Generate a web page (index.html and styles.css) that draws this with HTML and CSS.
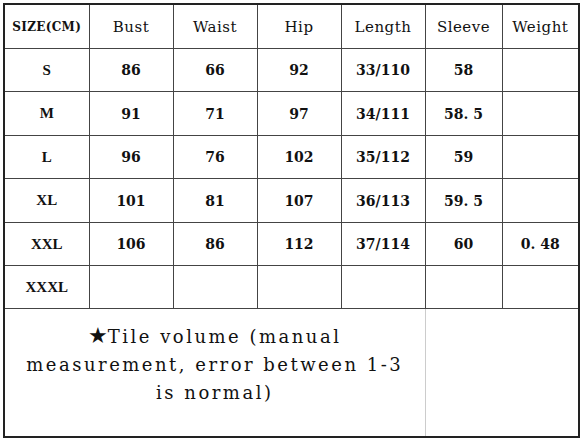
FILE: index.html
```html
<!DOCTYPE html>
<html>
<head>
<meta charset="utf-8">
<link rel="stylesheet" href="styles.css">
</head>
<body>
<table class="chart">
  <colgroup>
    <col class="c-size"><col class="c-std"><col class="c-std"><col class="c-std"><col class="c-std"><col class="c-narrow"><col class="c-narrow">
  </colgroup>
  <tr class="head">
    <td class="size-head">SIZE(CM)</td><td>Bust</td><td>Waist</td><td>Hip</td><td>Length</td><td>Sleeve</td><td>Weight</td>
  </tr>
  <tr class="row r42"><td class="sz">S</td><td>86</td><td>66</td><td>92</td><td>33/110</td><td>58</td><td></td></tr>
  <tr class="row r43"><td class="sz">M</td><td>91</td><td>71</td><td>97</td><td>34/111</td><td>58. 5</td><td></td></tr>
  <tr class="row r42"><td class="sz">L</td><td>96</td><td>76</td><td>102</td><td>35/112</td><td>59</td><td></td></tr>
  <tr class="row r43"><td class="sz">XL</td><td>101</td><td>81</td><td>107</td><td>36/113</td><td>59. 5</td><td></td></tr>
  <tr class="row r42"><td class="sz">XXL</td><td>106</td><td>86</td><td>112</td><td>37/114</td><td>60</td><td>0. 48</td></tr>
  <tr class="row r42"><td class="sz">XXXL</td><td></td><td></td><td></td><td></td><td></td><td></td></tr>
  <tr class="note-row">
    <td class="note" colspan="5"><span class="star">★</span>Tile volume (manual<br>measurement, error between 1-3<br>is normal)</td>
    <td class="blank" colspan="2"></td>
  </tr>
</table>
</body>
</html>
```

FILE: styles.css
```css
html, body {
  margin: 0;
  padding: 0;
  background: #ffffff;
}
body {
  padding: 3px 0 0 3px;
}
.chart {
  border-collapse: collapse;
  table-layout: fixed;
  width: 576px;
  font-family: "DejaVu Serif", "Liberation Serif", serif;
  color: #111;
  border: 2px solid #222;
}
.c-size { width: 85px; }
.c-std { width: 84px; }
.c-narrow { width: 77px; }
.chart td {
  border: 1px solid #444;
  text-align: center;
  vertical-align: middle;
  padding: 0;
  font-size: 15px;
  white-space: pre;
}
.head td { height: 43px; letter-spacing: 0.5px; }
.row td { font-weight: bold; font-size: 14px; }
.r42 td { height: 42px; }
.r43 td { height: 43px; }
.size-head { font-size: 12px !important; font-weight: bold; letter-spacing: 0.3px !important; }
.sz { font-family: "Liberation Serif", "DejaVu Serif", serif; font-size: 15px !important; }
.chart .note-row td { height: 113px; }
.chart .note {
  font-size: 18px;
  line-height: 28px;
  vertical-align: top;
  padding: 14px 0 0 0;
  font-weight: normal;
  letter-spacing: 2.5px;
  border-right: 1px solid #ccc;
}
.star { font-family: "DejaVu Sans", sans-serif; font-size: 22px; letter-spacing: 0; line-height: 20px; }
.chart .blank { border-left: 1px solid #ccc; padding: 14px 0 0 0; }
```
